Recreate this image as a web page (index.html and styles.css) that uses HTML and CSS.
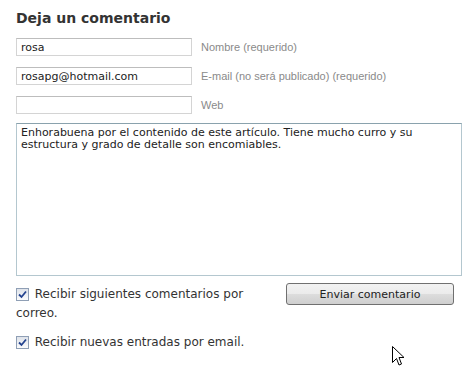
FILE: index.html
```html
<!DOCTYPE html>
<html lang="es">
<head>
    <meta charset="UTF-8">
    <title>Deja un comentario</title>
    <link rel="stylesheet" href="styles.css">
</head>
<body>

<div class="respond">
    <h3 class="respond-title">Deja un comentario</h3>
    <div class="field">
        <input type="text" class="text-input" value="rosa">
        <label>Nombre (requerido)</label>
    </div>
    <div class="field">
        <input type="text" class="text-input" value="rosapg@hotmail.com">
        <label>E-mail (no será publicado) (requerido)</label>
    </div>
    <div class="field">
        <input type="text" class="text-input" value="">
        <label>Web</label>
    </div>
    <textarea class="comment-box">Enhorabuena por el contenido de este artículo. Tiene mucho curro y su estructura y grado de detalle son encomiables.</textarea>
    <div class="form-bottom">
        <div class="options">
            <p class="option"><span class="check"><svg width="9" height="9" viewBox="0 0 9 9"><path d="M1 4.5 L3.5 7 L8 1.5" fill="none" stroke="#23438f" stroke-width="1.8"/></svg></span> Recibir siguientes comentarios por correo.</p>
            <p class="option"><span class="check"><svg width="9" height="9" viewBox="0 0 9 9"><path d="M1 4.5 L3.5 7 L8 1.5" fill="none" stroke="#23438f" stroke-width="1.8"/></svg></span> Recibir nuevas entradas por email.</p>
        </div>
        <button class="submit">Enviar comentario</button>
    </div>
    <svg class="pointer" width="13" height="21" viewBox="0 0 13 21">
        <path d="M0.5 0.5 L0.5 16.5 L4.5 12.5 L7 19 L9.5 18 L7 11.5 L12 11.5 Z" fill="#fff" stroke="#000" stroke-width="1"/>
    </svg>
</div>

</body>
</html>
```

FILE: styles.css
```css
body {
    margin: 0;
    background-color: #fff;
    font-family: 'DejaVu Sans', Verdana, sans-serif;
    color: #333;
}
.respond {
    position: relative;
    padding: 9px 15px 0 16px;
    height: 362px;
}
.respond-title {
    margin: 0 0 10px;
    font-size: 14px;
    font-weight: bold;
    color: #333;
    line-height: 19px;
}
.field {
    display: flex;
    align-items: center;
    margin-bottom: 11px;
}
.field label {
    margin-left: 9px;
    font-family: 'Liberation Sans', Arial, sans-serif;
    font-size: 11px;
    color: #8a8a8a;
}
.text-input {
    box-sizing: border-box;
    width: 176px;
    height: 18px;
    margin: 0;
    padding: 0 4px;
    border: 1px solid #d4d4d4;
    border-top-color: #bdbdbd;
    font-family: 'DejaVu Sans', Verdana, sans-serif;
    font-size: 11px;
    color: #222;
    outline: none;
}
.comment-box {
    display: block;
    box-sizing: border-box;
    width: 446px;
    height: 153px;
    margin: -2px 0 0;
    padding: 3px 4px;
    border: 1px solid #b4c7cf;
    border-top-color: #8aa2ad;
    font-family: 'DejaVu Sans', Verdana, sans-serif;
    font-size: 11px;
    line-height: 12px;
    color: #222;
    resize: none;
    outline: none;
}
.form-bottom {
    display: flex;
    align-items: flex-start;
    margin-top: 9px;
}
.options {
    width: 262px;
}
.option {
    margin: 0 0 10px;
    font-size: 12px;
    line-height: 19px;
    color: #333;
}
.check {
    display: inline-flex;
    align-items: center;
    justify-content: center;
    box-sizing: border-box;
    width: 13px;
    height: 13px;
    margin-right: 2px;
    vertical-align: -1px;
    border: 1px solid #8f9fb5;
    background: linear-gradient(#dfe3ea, #fafbfc);
}
.submit {
    box-sizing: border-box;
    width: 168px;
    height: 22px;
    margin: -2px 7px 0 auto;
    padding: 0;
    border: 1px solid #707070;
    border-radius: 3px;
    background: linear-gradient(#f2f2f2 0%, #ebebeb 50%, #dddddd 51%, #cfcfcf 100%);
    font-family: 'DejaVu Sans', Verdana, sans-serif;
    font-size: 11px;
    color: #222;
}
.pointer {
    position: absolute;
    left: 392px;
    top: 346px;
}
```
